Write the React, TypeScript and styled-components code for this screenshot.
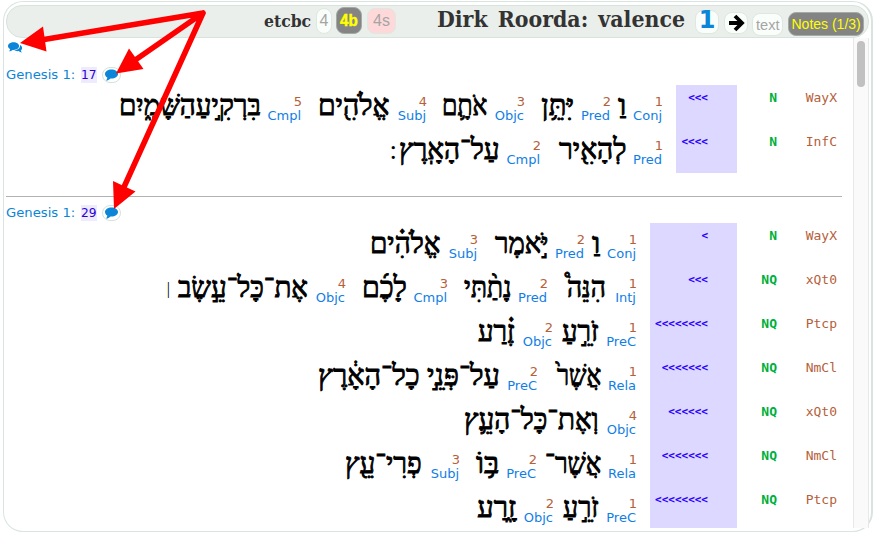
import React, { useLayoutEffect, useRef, useState } from "react";
import styled, { createGlobalStyle } from "styled-components";

const GlobalStyle = createGlobalStyle`
  * { box-sizing: border-box; }
  body { margin: 0; background: #fff; overflow: hidden; font-family: "DejaVu Sans", sans-serif; }
`;

const Page = styled.div`
  position: relative;
  width: 887px;
  height: 541px;
  padding: 1px 0 0 3px;
`;
const Frame = styled.div`
  width: 870px;
  height: 531px;
  padding: 3px 2px 0 2px;
  border: 1px solid #d9e4de;
  border-right-width: 2px;
  border-radius: 20px;
`;
const Header = styled.header`
  display: flex;
  align-items: flex-start;
  width: 863px;
  height: 33px;
  padding-left: 257px;
  background: #ebefec;
  border: 1px solid #d7e3dc;
  border-radius: 16px;
`;
const FitBox = styled.span<{ $w: number }>`
  display: block;
  flex: none;
  width: ${(p) => p.$w}px;
  white-space: nowrap;
`;
const FitInner = styled.span<{ $rtl?: boolean }>`
  display: inline-block;
  transform-origin: ${(p) => (p.$rtl ? "100% 50%" : "0 50%")};
`;

function Fit({ w, rtl, children }: { w: number; rtl?: boolean; children: React.ReactNode }) {
  const ref = useRef<HTMLSpanElement>(null);
  const [scale, setScale] = useState(1);
  useLayoutEffect(() => {
    const natural = ref.current?.offsetWidth;
    if (natural) setScale(w / natural);
  }, [w]);
  return (
    <FitBox $w={w}>
      <FitInner ref={ref} $rtl={rtl} style={{ transform: `scaleX(${scale})` }}>
        {children}
      </FitInner>
    </FitBox>
  );
}

const Source = styled.div`
  margin-top: 4px;
  font: bold 17px/22px "DejaVu Serif Condensed", "DejaVu Serif", serif;
  color: #333;
`;
const Title = styled.h1`
  margin: -1px 0 0 41px;
  font: bold 23px/28px "DejaVu Serif Condensed", "DejaVu Serif", serif;
  word-spacing: 3px;
  color: #333;
`;
const Pill = styled.span<{ $w: number; $h: number; $ml: number; $mt: number; $tone?: "active" | "pink" }>`
  display: flex;
  flex: none;
  align-items: center;
  justify-content: center;
  width: ${(p) => p.$w}px;
  height: ${(p) => p.$h}px;
  margin: ${(p) => p.$mt}px 0 0 ${(p) => p.$ml}px;
  border: 1px solid ${(p) => (p.$tone === "active" ? "#a4aba7" : "#dce8e0")};
  border-radius: 8px;
  background: ${(p) => (p.$tone === "active" ? "#848484" : p.$tone === "pink" ? "#ffd9d9" : "#fafefb")};
  color: ${(p) => (p.$tone === "active" ? "#ff0" : "#a5a5a5")};
  font-family: "Liberation Sans", sans-serif;
  font-size: 16px;
  white-space: nowrap;
`;
const Bold = styled.b`
  -webkit-text-stroke: 0.5px currentColor;
`;
const PageNumber = styled.b`
  color: #0a85d8;
  font: bold 24px/20px "DejaVu Sans", sans-serif;
  margin-top: -4px;
`;
const Small = styled.span`
  font-size: 14px;
`;

const Body = styled.div`
  display: flex;
  height: 490px;
`;
const Content = styled.main`
  width: 847px;
  height: 490px;
  overflow: hidden;
`;
const Track = styled.div`
  width: 16px;
  height: 490px;
  padding: 3px 0 0 3px;
  background: #fafafa;
  border: solid #e8e8e8;
  border-width: 0 1px;
`;
const Thumb = styled.div`
  width: 8px;
  height: 46px;
  border-radius: 4px;
  background: #c1c1c1;
`;
const Top = styled.div`
  height: 26px;
  padding: 4px 0 0 2px;
`;
const Verse = styled.section`
  width: 836px;
`;
const Head = styled.div`
  display: flex;
  align-items: center;
  height: 21px;
  font-size: 13px;
  line-height: 16px;
  color: #0a85d8;
`;
const Num = styled.span`
  height: 16px;
  margin-left: 6px;
  background: #efebff;
  color: #2b00d8;
`;
const Bubble = styled.span`
  display: flex;
  align-items: center;
  justify-content: center;
  width: 19px;
  height: 16px;
  margin-left: 5px;
  border: 1px solid #d3e3d8;
  border-radius: 9px;
`;
const Rule = styled.hr`
  width: 836px;
  height: 1px;
  margin: 23px 0 5px;
  border: 0;
  background: #b2b2b2;
`;
const Row = styled.div`
  display: flex;
  height: 44px;
`;
const Phrases = styled.div<{ $w: number }>`
  display: flex;
  direction: rtl;
  flex: none;
  width: ${(p) => p.$w}px;
  padding-right: 13px;
`;
const Tag = styled.span<{ $w: number }>`
  display: flex;
  flex: none;
  flex-direction: column;
  direction: ltr;
  align-items: flex-end;
  width: ${(p) => p.$w}px;
  padding-top: 10px;
  margin-left: 7px;
  font-size: 13px;
  line-height: 14px;
  color: #0f7ee6;
`;
const Order = styled.span`
  height: 14px;
  line-height: 13px;
  color: #b5603a;
`;
const Fn = styled.span`
  margin-right: 1px;
`;
const Hebrew = styled.span<{ $gap: number }>`
  margin-left: ${(p) => p.$gap}px;
  font: 29px/40px "Liberation Serif", serif;
  color: #000;
  -webkit-text-stroke: 0.9px #000;
`;
const Mark = styled.span<{ $size: number; $lift: number; $gap: number }>`
  display: inline-block;
  margin-right: ${(p) => p.$gap}px;
  font-size: ${(p) => p.$size}px;
  line-height: 20px;
  vertical-align: ${(p) => p.$lift}px;
  -webkit-text-stroke: 0;
`;
const Indent = styled.span<{ $w: number }>`
  flex: none;
  width: ${(p) => p.$w}px;
  padding: 5px 29px 0 0;
  background: #dcd8ff;
  color: #2a00ff;
  font: bold 11px/16px "DejaVu Sans Mono", monospace;
  text-align: right;
`;
const Domain = styled.span`
  width: 40px;
  padding-top: 5px;
  color: #00b03c;
  font: bold 13px/16px "DejaVu Sans Mono", monospace;
  text-align: right;
`;
const Kind = styled.span`
  width: 60px;
  padding-top: 5px;
  color: #b5603a;
  font: 13px/16px "DejaVu Sans Mono", monospace;
  text-align: right;
`;
const Overlay = styled.svg`
  position: absolute;
  left: 0;
  top: 0;
`;

type Phrase = [order: number, fn: string, text: string, width: number, gap: number, end?: "stop" | "bar"];
type Clause = { phrases: Phrase[]; depth: number; domain: string; kind: string };

const TAG_WIDTH: Record<string, number> = {
  Conj: 30, Pred: 30, Objc: 31, Subj: 31, Cmpl: 34, PreC: 31, Rela: 29, Intj: 24,
};

const verse17: Clause[] = [
  { phrases: [[1, "Conj", "וַ", 8, 7], [2, "Pred", "יִּתֵּ֥ן", 33, 16], [3, "Objc", "אֹתָ֛ם", 45, 15], [4, "Subj", "אֱלֹהִ֖ים", 71, 16], [5, "Cmpl", "בִּרְקִ֣יעַהַשָּׁמָ֑יִם", 142, 0]], depth: 3, domain: "N", kind: "WayX" },
  { phrases: [[1, "Pred", "לְהָאִ֖יר", 68, 17], [2, "Cmpl", "עַל־הָאָֽרֶץ", 101, 0, "stop"]], depth: 4, domain: "N", kind: "InfC" },
];
const verse29: Clause[] = [
  { phrases: [[1, "Conj", "וַ", 8, 7], [2, "Pred", "יֹּ֣אמֶר", 53, 17], [3, "Subj", "אֱלֹהִ֗ים", 70, 0]], depth: 1, domain: "N", kind: "WayX" },
  { phrases: [[1, "Intj", "הִנֵּה֩", 39, 19], [2, "Pred", "נָתַ֨תִּי", 47, 16], [3, "Cmpl", "לָכֶ֜ם", 45, 16], [4, "Objc", "אֶת־כָּל־עֵ֣שֶׂב", 130, 0, "bar"]], depth: 3, domain: "NQ", kind: "xQt0" },
  { phrases: [[1, "PreC", "זֹרֵ֣עַ", 37, 9], [2, "Objc", "זֶ֗רַע", 37, 0]], depth: 8, domain: "NQ", kind: "Ptcp" },
  { phrases: [[1, "Rela", "אֲשֶׁר֙", 44, 19], [2, "PreC", "עַל־פְּנֵ֣י כָל־הָאָ֔רֶץ", 182, 0]], depth: 7, domain: "NQ", kind: "NmCl" },
  { phrases: [[4, "Objc", "וְאֶת־כָּל־הָעֵ֛ץ", 135, 0]], depth: 6, domain: "NQ", kind: "xQt0" },
  { phrases: [[1, "Rela", "אֲשֶׁר־", 56, 8], [2, "PreC", "בּ֥וֹ", 23, 16], [3, "Subj", "פְרִי־עֵ֖ץ", 77, 0]], depth: 7, domain: "NQ", kind: "NmCl" },
  { phrases: [[1, "PreC", "זֹרֵ֣עַ", 36, 9], [2, "Objc", "זָ֑רַע", 39, 0]], depth: 8, domain: "NQ", kind: "Ptcp" },
];

function CommentIcon() {
  return (
    <svg width="13" height="12" viewBox="0 0 13 12">
      <path d="M6.5.5C10 .5 13 2.300 13 5s-3 4.500-6.500 4.500l-1-.1C4.300 10.700 2.700 11.400 1 11.500c.9-.8 1.300-1.700 1.300-2.900C.9 7.800 0 6.500 0 5 0 2.300 3 .5 6.500.5Z" fill="#0a85d8" />
    </svg>
  );
}

function CommentsIcon() {
  return (
    <svg width="15" height="13" viewBox="0 0 15 13" display="block">
      <path d="M12 3c1.300.6 2.100 1.600 2.100 2.900 0 1-.5 1.900-1.400 2.500.2.800.6 1.400 1.300 2-1.400 0-2.500-.5-3.400-1.300-1.600.2-3.300-.2-4.300-1 3.500 0 6.200-2 5.700-5.100Z" fill="#0a85d8" />
      <path d="M5.600.2c3.100 0 5.500 1.600 5.500 3.900S8.700 8 5.600 8l-1-.1C3.700 8.800 2.400 9.300 1 9.300c.7-.6 1.100-1.200 1.200-2C.8 6.600 0 5.400 0 4.100 0 1.800 2.500.2 5.600.2Z" fill="#0a85d8" />
    </svg>
  );
}

function ArrowIcon() {
  return (
    <svg width="17" height="18" viewBox="0 0 17 18">
      <path d="M1 9h12M7 2l7 7-7 7" fill="none" stroke="#000" strokeWidth="3.800" />
    </svg>
  );
}

function VerseBlock({ n, clauses, indent }: { n: number; clauses: Clause[]; indent: number }) {
  return (
    <Verse>
      <Head>
        <Fit w={69}>Genesis 1:</Fit>
        <Num><Fit w={16}>{n}</Fit></Num>
        <Bubble><CommentIcon /></Bubble>
      </Head>
      {clauses.map((c, i) => (
        <Row key={i}>
          <Phrases $w={731 - indent}>
            {c.phrases.map(([order, fn, text, w, gap, end]) => (
              <React.Fragment key={order}>
                <Tag $w={TAG_WIDTH[fn]}>
                  <Order>{order}</Order>
                  <Fn>{fn}</Fn>
                </Tag>
                <Hebrew $gap={gap} lang="he"><Fit w={w} rtl>{text}</Fit></Hebrew>
                {end === "stop" && <Hebrew $gap={0}><Mark $size={27} $lift={0} $gap={2}>:</Mark></Hebrew>}
                {end === "bar" && <Hebrew $gap={0}><Mark $size={16} $lift={3} $gap={8}>|</Mark></Hebrew>}
              </React.Fragment>
            ))}
          </Phrases>
          <Indent $w={indent}>{"<".repeat(c.depth)}</Indent>
          <Domain>{c.domain}</Domain>
          <Kind>{c.kind}</Kind>
        </Row>
      ))}
    </Verse>
  );
}

export default function App() {
  return (
    <Page>
      <GlobalStyle />
      <Frame>
        <Header>
          <Source><Fit w={47}>etcbc</Fit></Source>
          <Pill $w={16} $h={26} $ml={5} $mt={2}>4</Pill>
          <Pill $w={26} $h={27} $ml={4} $mt={1} $tone="active"><Bold><Fit w={18}>4b</Fit></Bold></Pill>
          <Pill $w={29} $h={26} $ml={5} $mt={2} $tone="pink">4s</Pill>
          <Title><Fit w={248}>Dirk Roorda: valence</Fit></Title>
          <Pill $w={24} $h={24} $ml={10} $mt={4}><PageNumber>1</PageNumber></Pill>
          <Pill $w={24} $h={22} $ml={5} $mt={6}><ArrowIcon /></Pill>
          <Pill $w={31} $h={23} $ml={4} $mt={7}><Small><Fit w={24}>text</Fit></Small></Pill>
          <Pill $w={76} $h={24} $ml={5} $mt={6} $tone="active"><Small><Fit w={69}>Notes (1/3)</Fit></Small></Pill>
        </Header>
        <Body>
          <Content>
            <Top><CommentsIcon /></Top>
            <VerseBlock n={17} clauses={verse17} indent={61} />
            <Rule />
            <VerseBlock n={29} clauses={verse29} indent={87} />
          </Content>
          <Track><Thumb /></Track>
        </Body>
      </Frame>
      <Overlay width="887" height="541" viewBox="0 0 887 541">
        <g stroke="#f00" strokeWidth="5.500" strokeLinecap="round">
          <path d="M203 13 44 39.500M203 13 136 59.500M203 13 124 187" fill="none" />
        </g>
        <path d="m20 43 23-16.500L46.500 51.500ZM116 73.500 129 48.500 143.500 69ZM114 209 113 181 135.500 191.500Z" fill="#f00" />
      </Overlay>
    </Page>
  );
}
